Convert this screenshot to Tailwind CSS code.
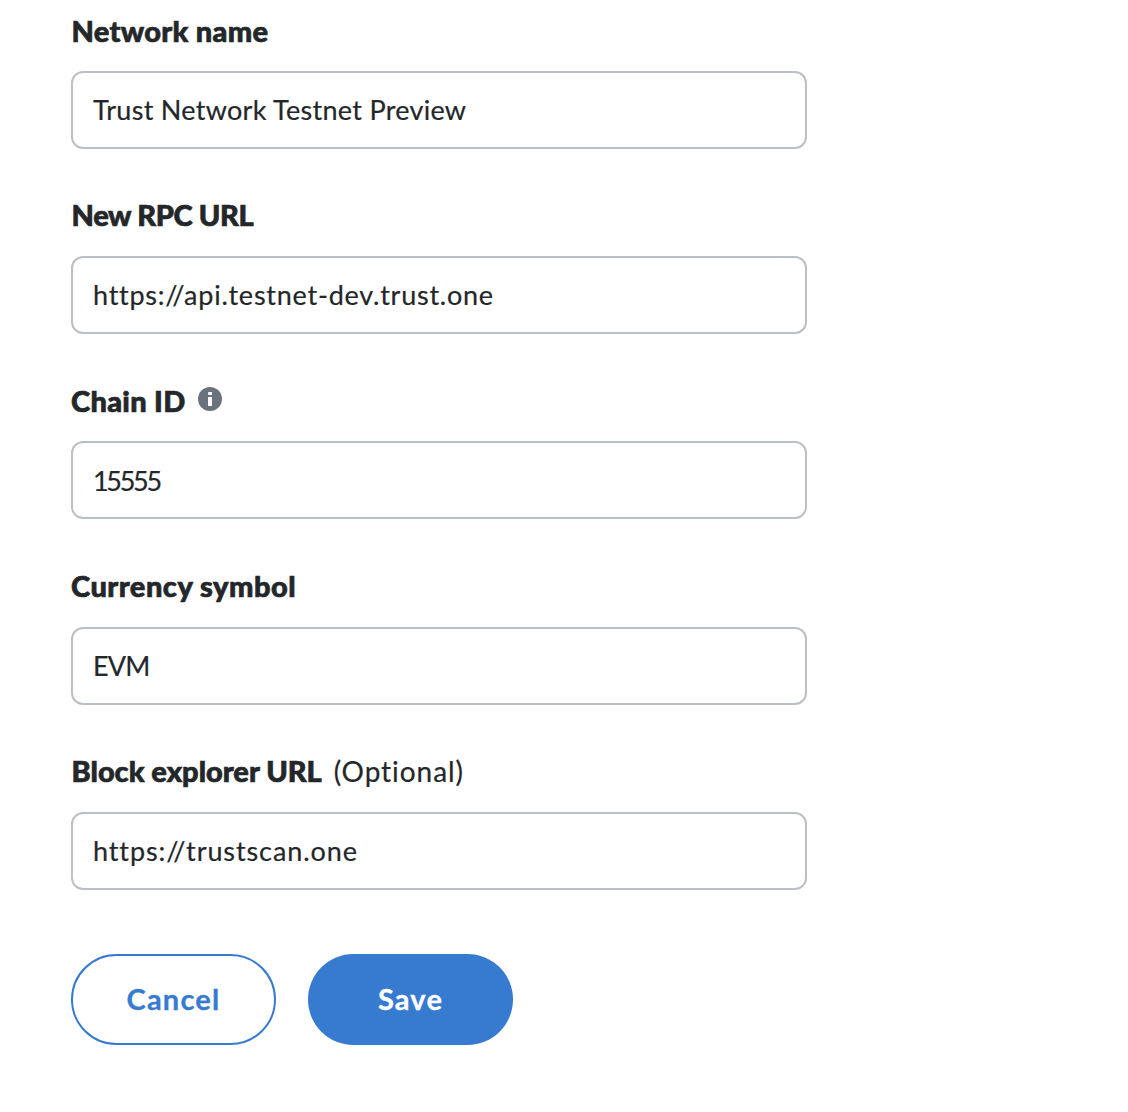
<!DOCTYPE html>
<html lang="en">
<head>
<meta charset="utf-8">
<title>Add network</title>
<script src="https://cdn.jsdelivr.net/npm/@tailwindcss/browser@4"></script>
</head>
<body class="bg-white font-['Lato',sans-serif] text-[#24272a] [font-variant-ligatures:none]">
<form class="ml-[71px] w-[736px] pt-2.5">
  <div class="flex flex-col gap-[46.2px]">
    <div>
      <label for="name" class="mb-[21px] flex h-10 items-center pt-px pl-[0.5px] text-[29px] font-black tracking-[0.3px] [-webkit-text-stroke:0.7px]">Network name</label>
      <input id="name" class="block h-[78px] w-full rounded-xl border-2 border-[#bbc0c5] px-5 pb-px text-[27px] tracking-[0.28px] [-webkit-text-stroke:0.2px]" value="Trust Network Testnet Preview">
    </div>
    <div>
      <label for="rpc" class="mb-[21px] flex h-10 items-center pl-[0.5px] text-[29px] font-black tracking-[-0.35px] [-webkit-text-stroke:0.7px]">New RPC URL</label>
      <input id="rpc" class="block h-[78px] w-full rounded-xl border-2 border-[#bbc0c5] px-5 pb-0.5 text-[27px] tracking-[0.75px] [-webkit-text-stroke:0.2px]" value="https://api.testnet-dev.trust.one">
    </div>
    <div>
      <div class="mb-[21px] flex h-10 items-center gap-3">
        <label for="chain" class="text-[29px] font-black tracking-[0.3px] [-webkit-text-stroke:0.7px]">Chain ID</label>
        <svg class="mb-[3px] size-6" viewBox="0 0 24 24" aria-hidden="true"><circle cx="12" cy="12" r="12" fill="#6a737d"/><path fill="#fff" d="M10.2 5h3.8v3h-3.8zM10 10h4v9h-4z"/></svg>
      </div>
      <input id="chain" class="block h-[78px] w-full rounded-xl border-2 border-[#bbc0c5] px-5 text-[27px] tracking-[-2.3px] [-webkit-text-stroke:0.2px]" value="15555">
    </div>
    <div>
      <label for="symbol" class="mb-[21px] flex h-10 items-center text-[29px] font-black tracking-[0.5px] [-webkit-text-stroke:0.7px]">Currency symbol</label>
      <input id="symbol" class="block h-[78px] w-full rounded-xl border-2 border-[#bbc0c5] px-5 text-[27px] tracking-[-0.8px] [-webkit-text-stroke:0.2px]" value="EVM">
    </div>
    <div>
      <label for="explorer" class="mb-[21px] flex h-10 items-center gap-3 pl-[0.5px] text-[29px] font-black [-webkit-text-stroke:0.7px]">Block explorer URL <span class="text-[28px] font-normal tracking-[0.95px] [-webkit-text-stroke:0.2px]">(Optional)</span></label>
      <input id="explorer" class="block h-[78px] w-full rounded-xl border-2 border-[#bbc0c5] px-5 pb-px text-[27px] tracking-[0.9px] [-webkit-text-stroke:0.2px]" value="https://trustscan.one">
    </div>
  </div>
  <div class="mt-[64.2px] flex gap-8">
    <button type="button" class="h-[91px] w-[205px] rounded-full border-2 border-[#377bd1] pb-0.5 text-[29px] font-bold tracking-[1.2px] text-[#377bd1] [-webkit-text-stroke:0.3px]">Cancel</button>
    <button type="button" class="h-[91px] w-[205px] rounded-full bg-[#377bd1] pb-0.5 text-[29px] font-bold tracking-[1.2px] text-white [-webkit-text-stroke:0.3px]">Save</button>
  </div>
</form>
</body>
</html>
